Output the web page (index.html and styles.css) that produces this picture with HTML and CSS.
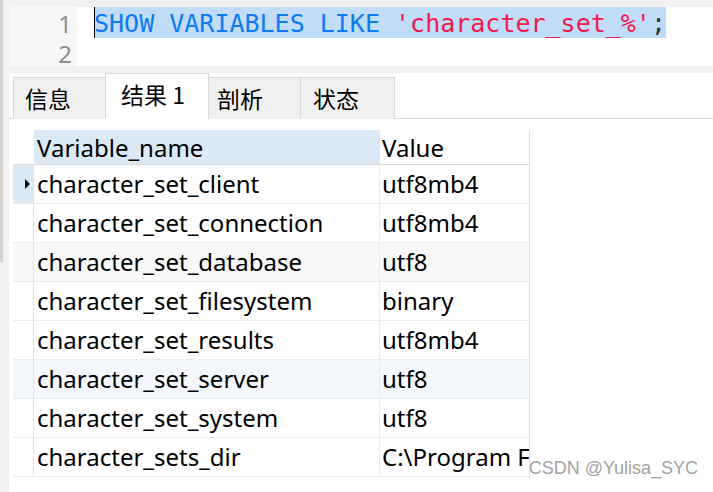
FILE: index.html
```html
<!DOCTYPE html>
<html lang="zh">
<head>
<meta charset="utf-8">
<link rel="stylesheet" href="styles.css">
</head>
<body>
<div class="leftbar"><div class="thumb"></div></div>
<div class="main">
  <div class="topband"></div>
  <div class="editor">
    <div class="gutter">
      <div class="ln l1">1</div>
      <div class="ln l2">2</div>
    </div>
    <div class="code">
      <div class="line l1"><span class="sel"><span class="caret"></span><span class="kw">SHOW VARIABLES LIKE </span><span class="str">'character_set_%'</span><span class="punc">;</span></span></div>
      <div class="line l2"></div>
    </div>
  </div>
  <div class="band"></div>
  <div class="tabs">
    <div class="tab t1">信息</div>
    <div class="tab active t2">结果 1</div>
    <div class="tab t3">剖析</div>
    <div class="tab t4">状态</div>
  </div>
  <div class="panel">
    <div class="grid">
      <div class="row head">
        <div class="ind"></div>
        <div class="cell name hsel">Variable_name</div>
        <div class="cell val">Value</div>
      </div>
      <div class="row">
        <div class="ind cur"><span class="arrow"></span></div>
        <div class="cell name">character_set_client</div>
        <div class="cell val">utf8mb4</div>
      </div>
      <div class="row">
        <div class="ind"></div>
        <div class="cell name">character_set_connection</div>
        <div class="cell val">utf8mb4</div>
      </div>
      <div class="row alt">
        <div class="ind"></div>
        <div class="cell name">character_set_database</div>
        <div class="cell val">utf8</div>
      </div>
      <div class="row">
        <div class="ind"></div>
        <div class="cell name">character_set_filesystem</div>
        <div class="cell val">binary</div>
      </div>
      <div class="row">
        <div class="ind"></div>
        <div class="cell name">character_set_results</div>
        <div class="cell val">utf8mb4</div>
      </div>
      <div class="row hover">
        <div class="ind"></div>
        <div class="cell name">character_set_server</div>
        <div class="cell val">utf8</div>
      </div>
      <div class="row">
        <div class="ind"></div>
        <div class="cell name">character_set_system</div>
        <div class="cell val">utf8</div>
      </div>
      <div class="row">
        <div class="ind"></div>
        <div class="cell name">character_sets_dir</div>
        <div class="cell val">C:\Program Files\MySQL\MySQL Server 8.0\share\charsets\</div>
      </div>
    </div>
  </div>
</div>
<div class="watermark">CSDN @Yulisa_SYC</div>
</body>
</html>
```

FILE: styles.css
```css
html, body {
  margin: 0;
  padding: 0;
}
body {
  width: 713px;
  height: 492px;
  overflow: hidden;
  display: flex;
  background: #ffffff;
  font-family: "Noto Sans", "Noto Sans CJK SC", sans-serif;
  color: #000;
  position: relative;
}
.leftbar {
  width: 9px;
  flex: none;
  background: #f0f0f0;
}
.thumb {
  width: 3px;
  height: 262px;
  background: #d2d2d2;
}
.main {
  flex: 1;
  display: flex;
  flex-direction: column;
  min-width: 0;
}
.topband {
  height: 7px;
  background: #f0f0f0;
}
.editor {
  height: 59px;
  display: flex;
  background: #fff;
}
.gutter {
  width: 68px;
  background: #f7f7f7;
  flex: none;
}
.ln {
  padding-right: 5px;
  padding-top: 3px;
  box-sizing: border-box;
  font-family: "Noto Sans", sans-serif;
  font-size: 24px;
  line-height: 24px;
  color: #8e8e8e;
  display: flex;
  align-items: center;
  justify-content: flex-end;
}
.l1 { height: 31px; }
.l2 { height: 28px; }
.code {
  flex: 1;
  padding-left: 17px;
  font-family: "DejaVu Sans Mono", monospace;
  font-size: 25px;
}
.line {
  display: flex;
  align-items: stretch;
}
.sel {
  background: #c0dcf7;
  display: flex;
  align-items: center;
  padding-top: 2px;
  box-sizing: border-box;
  position: relative;
  white-space: pre;
}
.caret {
  position: absolute;
  left: 0;
  top: 0;
  width: 1px;
  height: 100%;
  background: #000;
}
.kw { color: #0f7af0; }
.str { color: #f2194b; }
.punc { color: #333; }
.band {
  height: 7px;
  background: #f0f0f0;
}
.tabs {
  height: 45px;
  display: flex;
  align-items: flex-end;
  padding-left: 4px;
  border-bottom: 1px solid #d9d9d9;
  background: #fff;
}
.tab {
  box-sizing: border-box;
  height: 42px;
  margin-bottom: -1px;
  background: #f0f0f0;
  border: 1px solid #d9d9d9;
  border-bottom: none;
  font-family: "Noto Sans CJK SC", sans-serif;
  font-size: 23px;
  display: flex;
  align-items: center;
  padding-left: 11px;
  padding-bottom: 2px;
  margin-right: -1px;
}
.t1 { width: 93px; }
.t2 { width: 104px; }
.t3 { width: 93px; padding-left: 8px; }
.t4 { width: 95px; padding-left: 12px; }
.tab.active {
  height: 46px;
  background: #fff;
  padding-left: 15px;
  padding-bottom: 6px;
  position: relative;
  z-index: 1;
}
.panel {
  flex: 1;
  padding: 11px 0 0 4px;
  background: #fff;
}
.grid {
  width: 517px;
  border-right: 1px solid #e3e3e3;
  box-sizing: border-box;
}
.row {
  display: flex;
  height: 39px;
  box-sizing: border-box;
  border-bottom: 1px solid #ececec;
}
.row.head {
  height: 35px;
  border-bottom: 1px solid #d9d9d9;
}
.row.alt { background: #f8f8f8; }
.row.hover { background: #f4f8fd; }
.ind {
  width: 21px;
  flex: none;
  box-sizing: border-box;
  border-right: 1px solid #e3e3e3;
  display: flex;
  align-items: center;
  justify-content: flex-end;
  padding-right: 3px;
}
.head .ind { border-right: none; }
.ind.cur { background: #dbe9f7; }
.arrow {
  width: 0;
  height: 0;
  border-top: 5px solid transparent;
  border-bottom: 5px solid transparent;
  border-left: 5px solid #000;
}
.cell {
  box-sizing: border-box;
  font-size: 24px;
  line-height: 38px;
  padding-left: 3px;
  white-space: nowrap;
  overflow: hidden;
}
.head .cell { line-height: 35px; }
.name {
  width: 346px;
  flex: none;
  border-right: 1px solid #ececec;
}
.hsel { background: #dbe9f7; border-right: 1px solid #dbe9f7; }
.val {
  flex: 1;
  min-width: 0;
  padding-left: 2px;
}
.watermark {
  position: absolute;
  right: 15px;
  bottom: 13px;
  font-family: "Liberation Sans", Arial, sans-serif;
  font-size: 18px;
  line-height: 22px;
  color: #a3a3a3;
  text-shadow: 0 0 2px #fff;
  white-space: nowrap;
}
```
